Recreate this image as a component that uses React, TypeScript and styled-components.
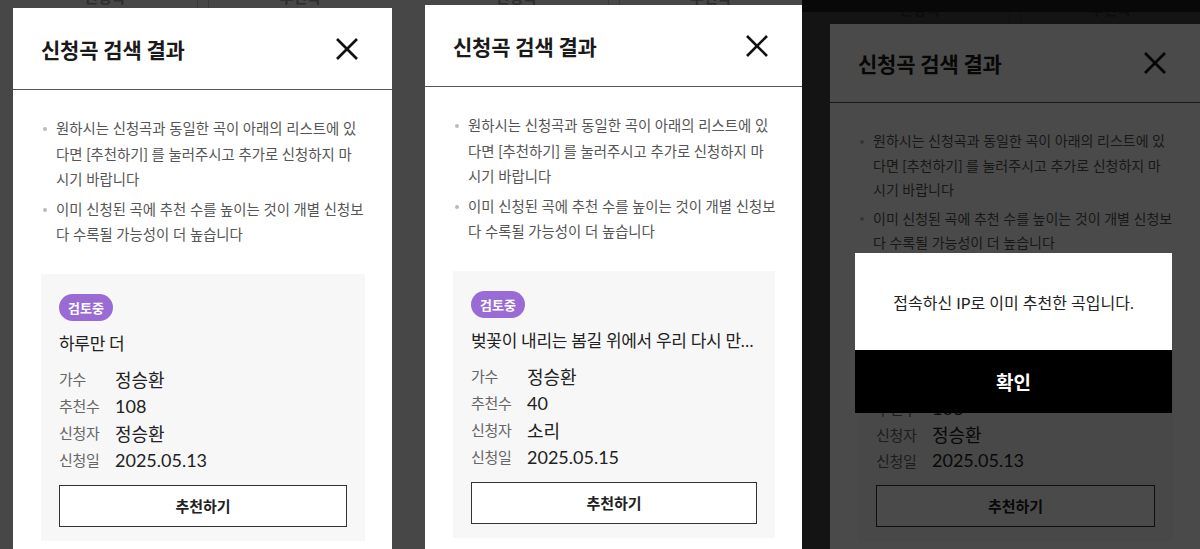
import styled, { createGlobalStyle, css } from 'styled-components';

type Song = {
	status: string;
	title: string;
	singer: string;
	votes: number;
	requester: string;
	date: string;
};

const songs: Song[] = [
	{ status: '검토중', title: '하루만 더', singer: '정승환', votes: 108, requester: '정승환', date: '2025.05.13' },
	{
		status: '검토중',
		title: '벚꽃이 내리는 봄길 위에서 우리 다시 만나요',
		singer: '정승환',
		votes: 40,
		requester: '소리',
		date: '2025.05.15',
	},
];

const notices = [
	'원하시는 신청곡과 동일한 곡이 아래의 리스트에 있\n다면 [추천하기] 를 눌러주시고 추가로 신청하지 마\n시기 바랍니다',
	'이미 신청된 곡에 추천 수를 높이는 것이 개별 신청보\n다 수록될 가능성이 더 높습니다',
];

const GlobalStyle = createGlobalStyle`
	* {
		box-sizing: border-box;
	}
	body {
		margin: 0;
		background: #474747;
		font-family: 'Lato', 'Noto Sans CJK KR', sans-serif;
		color: #222;
	}
	ul, dl, dd {
		margin: 0;
		padding: 0;
	}
`;

const CloseIcon = () => (
	<svg width="24" height="24" viewBox="0 0 24 24" fill="none" stroke="currentColor" strokeWidth="2.6">
		<line x1="2" y1="2" x2="22" y2="22" />
		<line x1="22" y1="2" x2="2" y2="22" />
	</svg>
);

const SearchResultModal = ({ song, dense = false }: { song: Song; dense?: boolean }) => (
	<Modal>
		<ModalHeader $dense={dense}>
			<ModalTitle>신청곡 검색 결과</ModalTitle>
			<CloseButton type="button" aria-label="닫기">
				<CloseIcon />
			</CloseButton>
		</ModalHeader>
		<ModalBody>
			<NoticeList $dense={dense}>
				{notices.map((notice) => (
					<li key={notice}>{notice}</li>
				))}
			</NoticeList>
			<ResultCard $dense={dense}>
				<StatusBadge>{song.status}</StatusBadge>
				<SongTitle>{song.title}</SongTitle>
				<InfoList $dense={dense}>
					<dt>가수</dt>
					<dd>{song.singer}</dd>
					<dt>추천수</dt>
					<dd>{song.votes}</dd>
					<dt>신청자</dt>
					<dd>{song.requester}</dd>
					<dt>신청일</dt>
					<dd>{song.date}</dd>
				</InfoList>
				<RecommendButton type="button">추천하기</RecommendButton>
			</ResultCard>
		</ModalBody>
	</Modal>
);

const PageTabsRow = ({ height }: { height: number }) => (
	<PageTabs $height={height}>
		<span>신청곡</span>
		<span>추천곡</span>
	</PageTabs>
);

const App = () => (
	<>
		<GlobalStyle />
		<Stage>
			<Frame $width={409}>
				<ModalColumn $inset={13} $width={379}>
					<PageTabsRow height={8} />
					<SearchResultModal song={songs[0]} />
				</ModalColumn>
			</Frame>
			<Frame $width={393}>
				<ModalColumn $inset={16} $width={377}>
					<PageTabsRow height={5} />
					<SearchResultModal song={songs[1]} />
				</ModalColumn>
			</Frame>
			<Frame $width={398} $dimmed>
				<StatusBar />
				<ModalColumn $inset={28} $width={370}>
					<PageTabsRow height={12} />
					<SearchResultModal song={songs[0]} dense />
				</ModalColumn>
				<Alert role="alertdialog">
					<AlertMessage>접속하신 IP로 이미 추천한 곡입니다.</AlertMessage>
					<AlertConfirm type="button">확인</AlertConfirm>
				</Alert>
			</Frame>
		</Stage>
	</>
);

const Stage = styled.div`
	display: flex;
	width: 1200px;
	height: 549px;
	overflow: hidden;
`;

const Frame = styled.section<{ $width: number; $dimmed?: boolean }>`
	position: relative;
	display: flex;
	flex-direction: column;
	flex: 0 0 ${({ $width }) => $width}px;
	height: 549px;
	overflow: hidden;
	background: #474747;
	${({ $dimmed }) =>
		$dimmed &&
		css`
			&::after {
				content: '';
				position: absolute;
				inset: 0;
				background: rgba(0, 0, 0, 0.71);
				z-index: 1;
			}
		`}
`;

const StatusBar = styled.div`
	flex: 0 0 12px;
	background: #1c1c1c;
`;

const ModalColumn = styled.div<{ $inset: number; $width: number }>`
	display: flex;
	flex-direction: column;
	flex: 1;
	min-height: 0;
	margin-left: ${({ $inset }) => $inset}px;
	width: ${({ $width }) => $width}px;
`;

const PageTabs = styled.div<{ $height: number }>`
	display: grid;
	grid-template-columns: 1fr 1fr;
	gap: 10px;
	flex: 0 0 ${({ $height }) => $height}px;
	overflow: hidden;

	span {
		display: block;
		margin-top: -13px;
		line-height: 20px;
		font-size: 15px;
		font-weight: 700;
		color: #2e2e2e;
		text-align: center;
		border-right: 1px solid #3a3a3a;
	}
	span + span {
		border-right: none;
		border-left: 1px solid #3a3a3a;
	}
`;

const Modal = styled.div`
	display: flex;
	flex-direction: column;
	flex: 1;
	background: #fff;
`;

const ModalHeader = styled.div<{ $dense: boolean }>`
	display: flex;
	align-items: center;
	justify-content: space-between;
	height: ${({ $dense }) => ($dense ? 79 : 82)}px;
	padding: 0 33px 0 28px;
	border-bottom: 1px solid #555;
`;

const ModalTitle = styled.h2`
	margin: 0;
	font-size: 21px;
	font-weight: 700;
	letter-spacing: -0.2px;
	color: #1a1a1a;
`;

const CloseButton = styled.button`
	display: flex;
	padding: 0;
	border: none;
	background: none;
	color: #111;
`;

const ModalBody = styled.div`
	padding: 26px 27px 0 28px;
`;

const NoticeList = styled.ul<{ $dense: boolean }>`
	list-style: none;

	li {
		position: relative;
		padding-left: 15px;
		font-size: ${({ $dense }) => ($dense ? 14 : 14.4)}px;
		line-height: ${({ $dense }) => ($dense ? 24.5 : 25.5)}px;
		color: #555;
		white-space: pre;
	}
	li::before {
		content: '';
		position: absolute;
		left: 2px;
		top: ${({ $dense }) => ($dense ? 10.5 : 11)}px;
		width: 4px;
		height: 4px;
		border-radius: 50%;
		background: #bbb;
	}
	li + li {
		margin-top: 4px;
	}
`;

const ResultCard = styled.div<{ $dense: boolean }>`
	display: flex;
	flex-direction: column;
	align-items: flex-start;
	margin-top: ${({ $dense }) => ($dense ? 22 : 26)}px;
	padding: 20px 18px 14px;
	background: #f7f7f7;
`;

const StatusBadge = styled.span`
	display: inline-flex;
	align-items: center;
	height: 27px;
	padding: 0 9px;
	border-radius: 14px;
	background: #9a6bd4;
	color: #fff;
	font-size: 13px;
	font-weight: 700;
`;

const SongTitle = styled.p`
	width: 100%;
	margin: 11px 0 0;
	font-size: 17px;
	line-height: 24px;
	letter-spacing: -0.3px;
	color: #222;
	white-space: nowrap;
	overflow: hidden;
	text-overflow: ellipsis;
`;

const InfoList = styled.dl<{ $dense: boolean }>`
	display: grid;
	grid-template-columns: 56px 1fr;
	grid-auto-rows: ${({ $dense }) => ($dense ? 26 : 27)}px;
	align-items: center;
	width: 100%;
	margin-top: 9.5px;

	dt {
		font-size: 15px;
		letter-spacing: -0.3px;
		color: #666;
	}
	dd {
		font-size: 18px;
		color: #222;
	}
`;

const RecommendButton = styled.button`
	width: 100%;
	height: 42px;
	margin-top: 11.5px;
	border: 1.5px solid #333;
	background: #fff;
	font-family: inherit;
	font-size: 15px;
	font-weight: 700;
	color: #222;
`;

const Alert = styled.div`
	position: absolute;
	top: 253px;
	left: 53px;
	width: 317px;
	z-index: 2;
	display: flex;
	flex-direction: column;
`;

const AlertMessage = styled.p`
	display: flex;
	align-items: center;
	justify-content: center;
	height: 97px;
	margin: 0;
	background: #fff;
	font-size: 16px;
	color: #222;
`;

const AlertConfirm = styled.button`
	height: 63px;
	border: none;
	background: #000;
	color: #fff;
	font-family: inherit;
	font-size: 19px;
	font-weight: 700;
`;

export default App;
